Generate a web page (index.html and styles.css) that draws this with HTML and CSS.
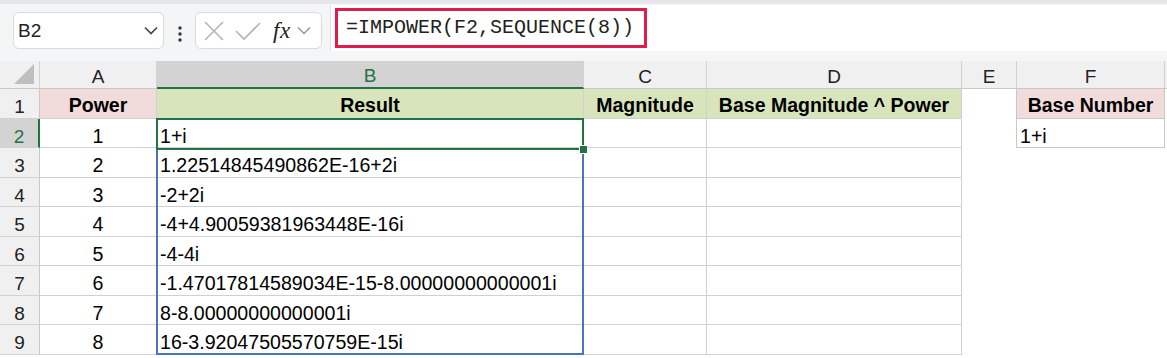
FILE: index.html
```html
<!DOCTYPE html>
<html lang="en">

<head>
  <meta charset="UTF-8" />
  <title>IMPOWER</title>
  <link rel="stylesheet" href="styles.css">
</head>

<body>
  <!-- Formula bar -->
  <div class="toolbar">
    <div class="namebox">
      <span>B2</span>
      <svg width="14" height="9" viewBox="0 0 14 9"><path d="M1 1.5 L7 7.5 L13 1.5" fill="none" stroke="#444" stroke-width="1.6"/></svg>
    </div>
    <svg class="dots" width="4" height="16" viewBox="0 0 4 16">
      <circle cx="2" cy="2" r="1.7" fill="#333"/><circle cx="2" cy="8" r="1.7" fill="#333"/><circle cx="2" cy="14" r="1.7" fill="#333"/>
    </svg>
    <div class="fxbox">
      <svg width="22" height="22" viewBox="0 0 22 22"><path d="M2 2 L20 20 M20 2 L2 20" stroke="#b4b4b4" stroke-width="1.6"/></svg>
      <svg width="26" height="22" viewBox="0 0 26 22"><path d="M1 11 L9 19 L25 3" fill="none" stroke="#b4b4b4" stroke-width="1.6"/></svg>
      <span class="fx">fx</span>
      <svg width="14" height="9" viewBox="0 0 14 9"><path d="M1 1.5 L7 7.5 L13 1.5" fill="none" stroke="#9a9a9a" stroke-width="1.5"/></svg>
    </div>
    <div class="formula">
      <div class="formula-hl">=IMPOWER(F2,SEQUENCE(8))</div>
    </div>
  </div>

  <!-- Sheet -->
  <div class="sheet">
    <div class="hd corner"><svg width="20" height="20" viewBox="0 0 20 20"><path d="M20 0 L20 20 L0 20 Z" fill="#bfbfbf"/></svg></div>
    <div class="hd">A</div>
    <div class="hd sel">B</div>
    <div class="hd">C</div>
    <div class="hd">D</div>
    <div class="hd">E</div>
    <div class="hd">F</div>
    <div class="hd last"></div>

    <div class="rh">1</div>
    <div class="c pink b center">Power</div>
    <div class="c green b center">Result</div>
    <div class="c green b center">Magnitude</div>
    <div class="c green b center">Base Magnitude ^ Power</div>
    <div class="c none"></div>
    <div class="c pink b center boxed">Base Number</div>
    <div class="c none"></div>

    <div class="rh rsel">2</div>
    <div class="c center">1</div>
    <div class="c">1+i</div>
    <div class="c"></div>
    <div class="c"></div>
    <div class="c none"></div>
    <div class="c boxed">1+i</div>
    <div class="c none"></div>

    <div class="rh">3</div>
    <div class="c center">2</div>
    <div class="c">1.22514845490862E-16+2i</div>
    <div class="c"></div>
    <div class="c"></div>
    <div class="c none"></div>
    <div class="c none"></div>
    <div class="c none"></div>

    <div class="rh">4</div>
    <div class="c center">3</div>
    <div class="c">-2+2i</div>
    <div class="c"></div>
    <div class="c"></div>
    <div class="c none"></div>
    <div class="c none"></div>
    <div class="c none"></div>

    <div class="rh">5</div>
    <div class="c center">4</div>
    <div class="c">-4+4.90059381963448E-16i</div>
    <div class="c"></div>
    <div class="c"></div>
    <div class="c none"></div>
    <div class="c none"></div>
    <div class="c none"></div>

    <div class="rh">6</div>
    <div class="c center">5</div>
    <div class="c">-4-4i</div>
    <div class="c"></div>
    <div class="c"></div>
    <div class="c none"></div>
    <div class="c none"></div>
    <div class="c none"></div>

    <div class="rh">7</div>
    <div class="c center">6</div>
    <div class="c">-1.47017814589034E-15-8.00000000000001i</div>
    <div class="c"></div>
    <div class="c"></div>
    <div class="c none"></div>
    <div class="c none"></div>
    <div class="c none"></div>

    <div class="rh">8</div>
    <div class="c center">7</div>
    <div class="c">8-8.00000000000001i</div>
    <div class="c"></div>
    <div class="c"></div>
    <div class="c none"></div>
    <div class="c none"></div>
    <div class="c none"></div>

    <div class="rh">9</div>
    <div class="c center">8</div>
    <div class="c">16-3.92047505570759E-15i</div>
    <div class="c"></div>
    <div class="c"></div>
    <div class="c none"></div>
    <div class="c none"></div>
    <div class="c none"></div>

    <!-- spill range and active cell -->
    <div class="spill"></div>
    <div class="active"><span class="handle"></span></div>
  </div>
</body>

</html>
```

FILE: styles.css
```css
/* Page */
body {
  margin: 0;
  background: #fff;
  font-family: "Liberation Sans", Arial, sans-serif;
  color: #000;
  overflow: hidden;
}

/* Formula bar */
.toolbar {
  height: 61px;
  box-sizing: border-box;
  background: #f4f5f7;
  border-top: 4px solid #e4e6ea;
  display: flex;
  align-items: flex-start;
}

.namebox {
  margin: 8px 0 0 13px;
  width: 151px;
  height: 37px;
  box-sizing: border-box;
  background: #fff;
  border: 1px solid #dadada;
  border-radius: 6px;
  display: flex;
  align-items: center;
  justify-content: space-between;
  padding: 0 5px 0 4px;
  font-size: 19px;
  color: #222;
}

.dots {
  margin: 22px 13px 0 14px;
}

.fxbox {
  margin-top: 8px;
  width: 127px;
  height: 37px;
  box-sizing: border-box;
  background: #fff;
  border: 1px solid #dadada;
  border-radius: 6px;
  display: flex;
  align-items: center;
  padding: 0 4px 0 7px;
  gap: 10px;
}

.fx {
  font-family: "Liberation Serif", serif;
  font-style: italic;
  font-size: 23px;
  color: #222;
  margin-left: 2px;
  margin-right: -4px;
  letter-spacing: 0.5px;
}

.formula {
  margin: 1px 0 0 8px;
  flex: 1;
  height: 46px;
  background: #fff;
  border-left: 1px solid #e2e2e2;
  padding: 3px 0 0 4px;
  box-sizing: border-box;
}

.formula-hl {
  width: 312px;
  height: 40px;
  box-sizing: border-box;
  border: 3px solid #df1d4a;
  padding: 5px 0 0 8px;
  font-family: "Liberation Mono", "DejaVu Sans Mono", monospace;
  font-size: 20px;
  color: #222;
}

/* Grid */
.sheet {
  position: relative;
  display: grid;
  grid-template-columns: 40px 117px 427px 123px 255px 55px 148px 1fr;
  grid-template-rows: 28px repeat(9, 29.5px);
}

.hd {
  background: #f0f0f0;
  border-right: 1px solid #d2d2d2;
  border-bottom: 1px solid #c8c8c8;
  display: flex;
  align-items: center;
  justify-content: center;
  padding-top: 4px;
  font-size: 19px;
  color: #222;
}

.hd.sel {
  background: #d3d3d3;
  color: #217346;
  border-bottom: 2px solid #217346;
}

.hd.last {
  border-right: none;
}

.corner {
  justify-content: flex-end;
  align-items: flex-end;
  padding: 0 5px 4px 0;
}

.rh {
  background: #f0f0f0;
  border-right: 1px solid #c8c8c8;
  border-bottom: 1px solid #d2d2d2;
  display: flex;
  align-items: flex-start;
  justify-content: center;
  padding-top: 8px;
  font-size: 19px;
  line-height: 1;
  color: #222;
}

.rh.rsel {
  background: #d3d3d3;
  color: #217346;
  border-right: 2px solid #217346;
}

.c {
  border-right: 1px solid #d0d0d0;
  border-bottom: 1px solid #d0d0d0;
  display: flex;
  align-items: flex-start;
  padding: 8px 0 0 3px;
  font-size: 19.6px;
  line-height: 1;
  white-space: nowrap;
}

.c.none {
  border: none;
}

.c.boxed {
  border: 1px solid #c8c8c8;
  border-top: none;
  margin-left: -1px;
}

.center {
  justify-content: center;
  padding-left: 0;
}

.b {
  font-weight: bold;
  font-size: 19.5px;
  padding-top: 7px;
}

.pink {
  background: #f2dcdb;
}

.green {
  background: #d8e4bc;
}

/* Overlays */
.spill {
  position: absolute;
  left: 156px;
  top: 87px;
  width: 424px;
  height: 203px;
  border: 2px solid #4a74c0;
  pointer-events: none;
}

.active {
  position: absolute;
  left: 156px;
  top: 57px;
  width: 424px;
  height: 27.5px;
  border: 2px solid #217346;
}

.handle {
  position: absolute;
  right: -6px;
  bottom: -6px;
  width: 7px;
  height: 7px;
  background: #217346;
  border: 1px solid #fff;
}
```
